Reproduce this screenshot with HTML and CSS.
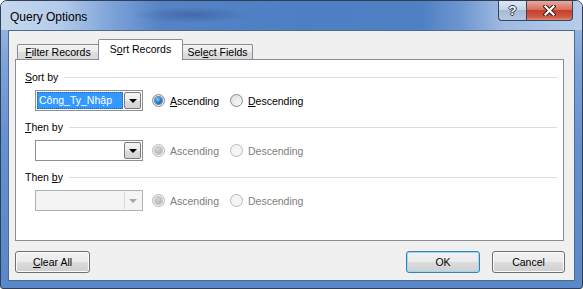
FILE: index.html
```html
<!DOCTYPE html>
<html lang="vi">
<head>
    <meta charset="UTF-8">
    <title>Query Options</title>
    <link rel="stylesheet" href="styles.css">
</head>
<body>
    <div class="window">
        <div class="titlebar">
            <span class="title">Query Options</span>
            <div class="caption-btns">
                <span class="cap help">?</span>
                <span class="cap close">
                    <svg width="13" height="11" viewBox="0 0 13 11">
                        <path d="M2.5 1.5 L10.5 9.5 M10.5 1.5 L2.5 9.5" stroke="#3b1c16" stroke-width="4.2" stroke-linecap="square"/>
                        <path d="M2.5 1.5 L10.5 9.5 M10.5 1.5 L2.5 9.5" stroke="#ffffff" stroke-width="2.2" stroke-linecap="square"/>
                    </svg>
                </span>
            </div>
        </div>

        <div class="client">
            <div class="tabs">
                <span class="tab tab-filter"><u>F</u>ilter Records</span>
                <span class="tab tab-sort active">S<u>o</u>rt Records</span>
                <span class="tab tab-select">Sel<u>e</u>ct Fields</span>
            </div>

            <div class="panel">
                <div class="group">
                    <div class="group-head"><span><u>S</u>ort by</span><i class="rule"></i></div>
                    <div class="group-row">
                        <div class="combo">
                            <span class="combo-text"><span class="selected">Công_Ty_Nhập</span></span>
                            <span class="combo-btn"><i class="arrow"></i></span>
                        </div>
                        <span class="radio asc checked"><span class="dot"></span><span><u>A</u>scending</span></span>
                        <span class="radio"><span class="dot"></span><span><u>D</u>escending</span></span>
                    </div>
                </div>

                <div class="group">
                    <div class="group-head"><span><u>T</u>hen by</span><i class="rule"></i></div>
                    <div class="group-row">
                        <div class="combo">
                            <span class="combo-text"></span>
                            <span class="combo-btn"><i class="arrow"></i></span>
                        </div>
                        <span class="radio asc checked disabled"><span class="dot"></span><span>Ascending</span></span>
                        <span class="radio disabled"><span class="dot"></span><span>Descending</span></span>
                    </div>
                </div>

                <div class="group">
                    <div class="group-head"><span>Then <u>b</u>y</span><i class="rule"></i></div>
                    <div class="group-row">
                        <div class="combo disabled">
                            <span class="combo-text"></span>
                            <span class="combo-btn"><i class="arrow"></i></span>
                        </div>
                        <span class="radio asc checked disabled"><span class="dot"></span><span>Ascending</span></span>
                        <span class="radio disabled"><span class="dot"></span><span>Descending</span></span>
                    </div>
                </div>
            </div>

            <div class="footer">
                <button class="btn btn-clear"><u>C</u>lear All</button>
                <span class="spacer"></span>
                <button class="btn btn-ok default">OK</button>
                <button class="btn btn-cancel">Cancel</button>
            </div>
        </div>
    </div>
</body>
</html>
```

FILE: styles.css
```css
* {
    box-sizing: border-box;
}

body {
    margin: 0;
    background: #ffffff;
    font-family: "Liberation Sans", Arial, sans-serif;
    font-size: 10.5px;
    color: #000;
}

u {
    text-decoration-thickness: 1px;
    text-underline-offset: 1px;
}

/* window frame */
.window {
    width: 583px;
    height: 289px;
    border: 1px solid #2f3f57;
    border-radius: 7px 7px 3px 3px;
    padding-bottom: 7px;
    background: linear-gradient(180deg, #a9c2e6 0px, #7ea3d8 60px, #6690cf 140px, #5a87c8 100%);
    display: flex;
    flex-direction: column;
    overflow: hidden;
}

.titlebar {
    height: 29px;
    display: flex;
    align-items: flex-start;
    padding-left: 9px;
    padding-right: 9px;
    background:
        radial-gradient(ellipse 60px 8px at 190px 14px, rgba(40, 60, 110, 0.35), rgba(40, 60, 110, 0)),
        linear-gradient(90deg, #c6d8ee 0px, #b3cbea 60px, #7ea3d8 110px, #5583c6 160px, #4e7fc4 300px, #4f80c4 420px, #6d96d0 460px, #9db9e2 500px, #b8cdea 583px);
}

.title {
    margin-top: 9px;
    font-size: 12px;
    line-height: 15px;
    color: #000;
    flex: 1;
}

.caption-btns {
    display: flex;
}

.cap {
    height: 20px;
    border: 1px solid #34455e;
    border-top: none;
    display: flex;
    align-items: center;
    justify-content: center;
}

.help {
    width: 28px;
    border-right: none;
    border-radius: 0 0 0 4px;
    background: linear-gradient(180deg, #dfe8f4 0%, #c6d4e7 45%, #a8bbd5 50%, #b7c8df 100%);
    color: #fff;
    font-weight: bold;
    font-size: 13px;
    text-shadow: 1px 0 0 #27364d, -1px 0 0 #27364d, 0 1px 0 #27364d, 0 -1px 0 #27364d;
}

.close {
    width: 47px;
    border-radius: 0 0 4px 0;
    background: linear-gradient(180deg, #e9a99b 0%, #d8705e 45%, #c4402a 50%, #cf5c45 85%, #e08b77 100%);
}

/* client area */
.client {
    flex: 1;
    margin: 0 7px;
    border: 1px solid #4f6a90;
    background: #f0f0f0;
    padding: 8px 10px 7px 6px;
    display: flex;
    flex-direction: column;
}

.tabs {
    height: 20px;
    display: flex;
    align-items: flex-end;
    padding-left: 2px;
}

.tab {
    height: 15px;
    border: 1px solid #898c95;
    border-bottom: none;
    border-radius: 2px 2px 0 0;
    background: linear-gradient(180deg, #f3f3f3 0%, #ebebeb 50%, #dedede 51%, #d9d9d9 100%);
    text-align: center;
    line-height: 14px;
}

.tab-filter {
    width: 82px;
}

.tab-sort {
    width: 85px;
    margin: 0 -1px -1px -1px;
}

.tab-select {
    width: 71px;
}

.tab.active {
    height: 21px;
    background: #ffffff;
    position: relative;
    z-index: 1;
    line-height: 19px;
}

.panel {
    height: 182px;
    border: 1px solid #898c95;
    background: #ffffff;
    padding: 10px 6px 0 9px;
}

.group {
    margin-bottom: 9px;
}

.group-head {
    height: 14px;
    display: flex;
    align-items: center;
    line-height: 14px;
}

.rule {
    flex: 1;
    height: 1px;
    margin-left: 6px;
    background: #d5dfe5;
}

.group-row {
    margin-top: 6px;
    margin-left: 10px;
    display: flex;
    align-items: center;
}

/* combo box */
.combo {
    width: 108px;
    height: 21px;
    border: 1px solid #8e8f8f;
    padding: 1px;
    display: flex;
    gap: 1px;
    background: #ffffff;
}

.combo-text {
    flex: 1;
    display: flex;
}

.selected {
    flex: 1;
    background: #3399ff;
    color: #ffffff;
    padding-left: 2px;
    line-height: 17px;
    outline: 1px dotted #1f5f9f;
    outline-offset: -1px;
}

.combo-btn {
    width: 17px;
    border: 1px solid #7a7a7a;
    border-radius: 2px;
    background: linear-gradient(180deg, #f4f4f4 0%, #ebebeb 50%, #dddddd 51%, #d3d3d3 100%);
    display: flex;
    align-items: center;
    justify-content: center;
}

.arrow {
    width: 0;
    height: 0;
    border-left: 4px solid transparent;
    border-right: 4px solid transparent;
    border-top: 4px solid #000;
}

.combo.disabled {
    background: #f4f4f4;
    border-color: #adb2b5;
}

.combo.disabled .combo-btn {
    border: none;
    border-left: 1px solid #d9dcde;
    border-radius: 0;
    background: #f4f4f4;
}

.combo.disabled .arrow {
    border-top-color: #a6a6a6;
}

/* radio buttons */
.radio {
    display: flex;
    align-items: center;
    gap: 5px;
    line-height: 14px;
}

.radio.asc {
    width: 78px;
    margin-left: 9px;
}

.dot {
    width: 13px;
    height: 13px;
    border-radius: 50%;
    border: 1px solid #8a8b8c;
    background: radial-gradient(circle at 65% 70%, #f6f6f6 0%, #dcdcdc 100%);
    display: flex;
    align-items: center;
    justify-content: center;
}

.radio.checked .dot::after {
    content: "";
    width: 7px;
    height: 7px;
    border-radius: 50%;
    background: radial-gradient(circle at 40% 35%, #8fd0ff 0%, #2a7fd4 45%, #12447f 100%);
    box-shadow: 0 0 0 1px #5e87b5;
}

.radio.disabled {
    color: #7d7d7d;
}

.radio.disabled .dot {
    border-color: #b8b8b8;
    background: #f4f4f4;
}

.radio.disabled.checked .dot::after {
    background: radial-gradient(circle at 40% 35%, #d6d6d6 0%, #a8a8a8 100%);
    box-shadow: 0 0 0 1px #c4c4c4;
}

/* buttons */
.footer {
    height: 22px;
    margin-top: 10px;
    margin-right: -1px;
    display: flex;
}

.spacer {
    flex: 1;
}

.btn {
    height: 22px;
    border: 1px solid #707070;
    border-radius: 3px;
    background: linear-gradient(180deg, #f2f2f2 0%, #ebebeb 50%, #dddddd 51%, #cfcfcf 100%);
    box-shadow: inset 0 0 0 1px #fbfbfb;
    font-family: inherit;
    font-size: 10.5px;
    color: #000;
    padding: 0;
}

.btn-clear {
    width: 75px;
}

.btn-ok {
    width: 74px;
    margin-right: 12px;
}

.btn-cancel {
    width: 73px;
}

.btn.default {
    border-color: #3c7fb1;
    box-shadow: inset 0 0 0 1px #9bd8f6;
}
```
